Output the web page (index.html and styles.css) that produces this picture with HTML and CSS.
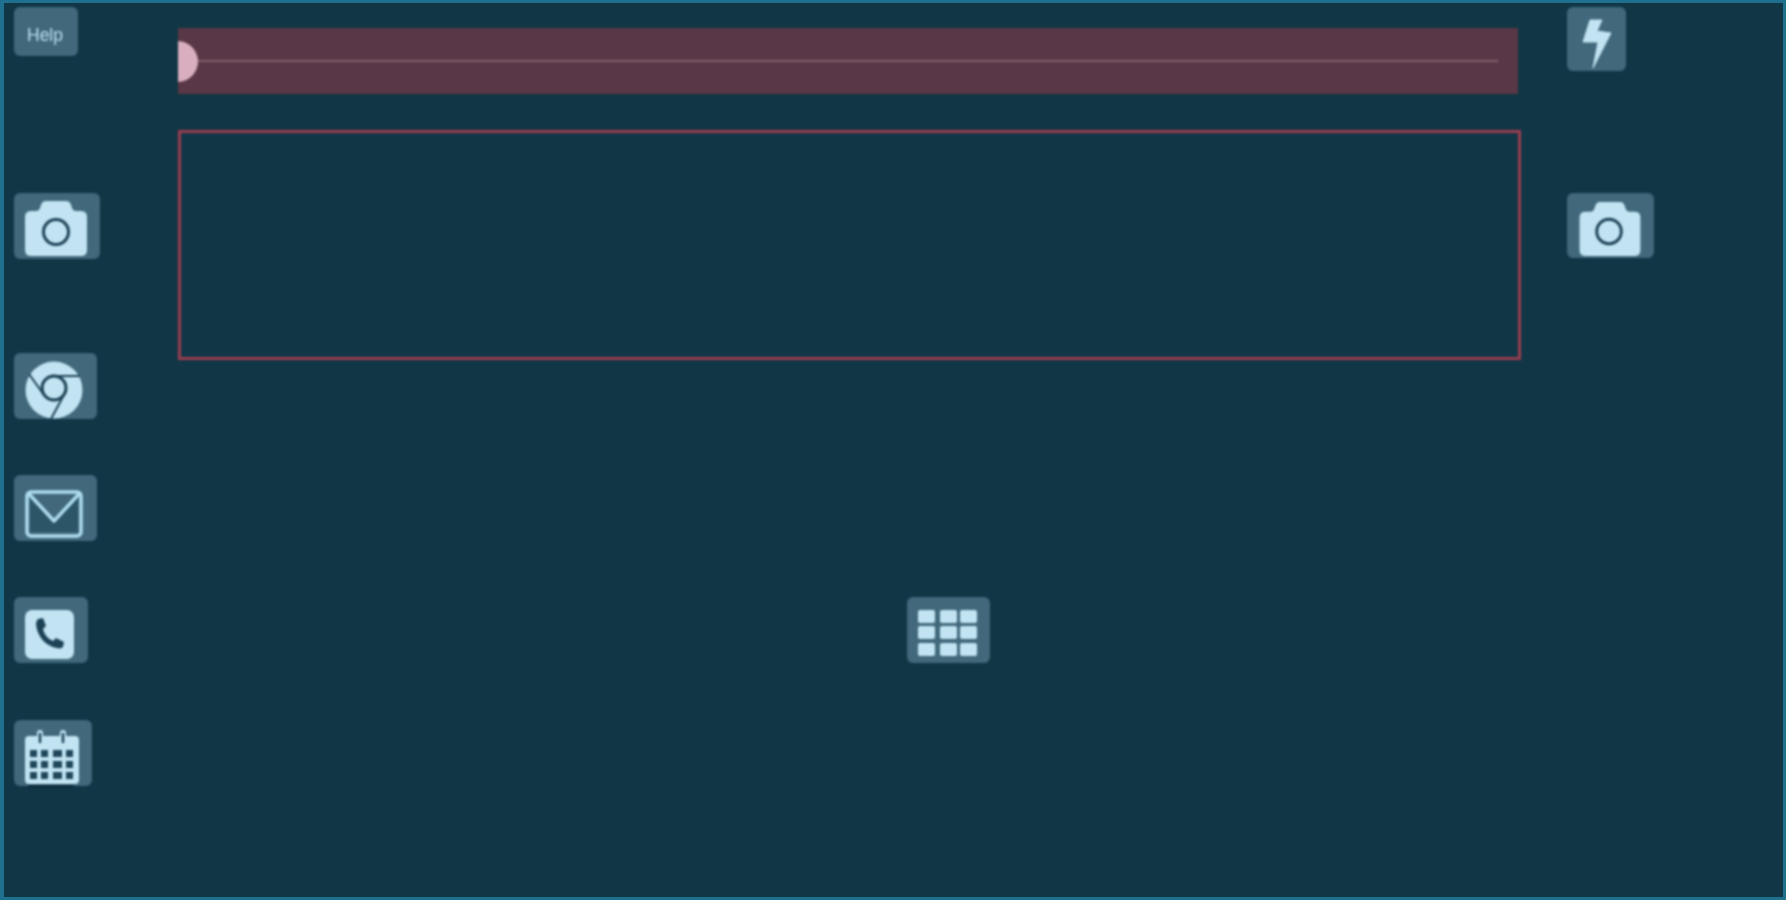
FILE: index.html
```html
<!DOCTYPE html>
<html lang="en">
<head>
    <meta charset="UTF-8">
    <title>Panel</title>
    <link rel="stylesheet" href="styles.css">
</head>
<body>
    <div class="frame">
        <div class="side-left">
            <button class="btn btn-help">Help</button>
            <button class="btn btn-camera">
                <svg class="icon icon-camera" width="62" height="55" viewBox="0 0 62 55">
                    <path fill="#c2e4f2" d="M6 10h5q3 0 4-3l1-3q1-4 5-4h20q4 0 5 4l1 3q1 3 4 3h5q6 0 6 6v33q0 6-6 6H6q-6 0-6-6V16q0-6 6-6z"/>
                    <circle cx="31" cy="31" r="12.5" fill="none" stroke="#1c4256" stroke-width="3"/>
                </svg>
            </button>
            <button class="btn btn-chrome">
                <svg class="icon icon-chrome" width="58" height="60" viewBox="0 0 58 60">
                    <circle cx="29" cy="30" r="28.5" fill="#c2e4f2"/>
                    <circle cx="29" cy="28" r="12" fill="none" stroke="#1c4256" stroke-width="3"/>
                    <path fill="none" stroke="#1c4256" stroke-width="2" d="M4 14l15 21M29 16h26M41 31L26 59"/>
                </svg>
            </button>
            <button class="btn btn-mail">
                <svg class="icon icon-mail" width="58" height="48" viewBox="0 0 58 48">
                    <path fill="#2d5568" d="M5 8l24 24L53 8v34H5z"/>
                    <rect x="2" y="2" width="54" height="44" rx="4" fill="none" stroke="#aeddef" stroke-width="3.5"/>
                    <path fill="none" stroke="#aeddef" stroke-width="3.5" stroke-linejoin="round" d="M4 4l25 27L54 4"/>
                </svg>
            </button>
            <button class="btn btn-phone">
                <svg class="icon icon-phone" width="49" height="49" viewBox="0 0 49 49">
                    <rect width="49" height="49" rx="7" fill="#c2e4f2"/>
                    <path fill="#1c4256" d="M13 9l5-1 3 8-3 3c1 5 5 10 10 12l3-3 8 4-1 5c-1 1-4 2-6 1C20 36 12 26 11 14c0-2 1-4 2-5z"/>
                </svg>
            </button>
            <button class="btn btn-calendar">
                <svg class="icon icon-calendar" width="54" height="58" viewBox="0 0 54 58">
                    <path fill="#c2e4f2" d="M4 6h8V3q0-3 3-3t3 3v3h17V3q0-3 3-3t3 3v3h9q4 0 4 4v40q0 4-4 4H4q-4 0-4-4V10q0-4 4-4z"/>
                    <path stroke="#1c4256" stroke-width="2.5" stroke-linecap="round" d="M15 4v8M38 4v8"/>
                    <g fill="#1f4659">
                        <rect x="5" y="20" width="7" height="7"/><rect x="16" y="20" width="7" height="7"/><rect x="28" y="20" width="9" height="7"/><rect x="41" y="20" width="7" height="7"/>
                        <rect x="5" y="31" width="7" height="7"/><rect x="16" y="31" width="7" height="7"/><rect x="28" y="31" width="9" height="7"/><rect x="41" y="31" width="7" height="7"/>
                        <rect x="5" y="42" width="7" height="7"/><rect x="16" y="42" width="7" height="7"/><rect x="28" y="42" width="9" height="7"/><rect x="41" y="42" width="7" height="7"/>
                    </g>
                    <rect x="3" y="55" width="46" height="2" fill="#0d2a3a"/>
                </svg>
            </button>
        </div>

        <div class="main">
            <div class="slider">
                <span class="slider-thumb"></span>
                <span class="slider-line"></span>
            </div>
            <div class="preview"></div>
            <button class="btn btn-grid">
                <svg class="icon icon-grid" width="60" height="46" viewBox="0 0 60 46">
                    <g fill="#c2e4f2">
                        <rect width="17" height="13" rx="2"/><rect x="22" width="17" height="13" rx="2"/><rect x="42" width="17" height="13" rx="2"/>
                        <rect y="16" width="17" height="13" rx="2"/><rect x="22" y="16" width="17" height="13" rx="2"/><rect x="42" y="16" width="17" height="13" rx="2"/>
                        <rect y="33" width="17" height="13" rx="2"/><rect x="22" y="33" width="17" height="13" rx="2"/><rect x="42" y="33" width="17" height="13" rx="2"/>
                    </g>
                </svg>
            </button>
        </div>

        <div class="side-right">
            <button class="btn btn-flash">
                <svg class="icon icon-flash" width="30" height="50" viewBox="0 0 30 50">
                    <path fill="#c2e4f2" stroke="#c2e4f2" stroke-linejoin="round" d="M8 1h12l-5 11 14 2-18 35 5-26H1z"/>
                </svg>
            </button>
            <button class="btn btn-camera-right">
                <svg class="icon icon-camera" width="62" height="54" viewBox="0 0 62 55">
                    <path fill="#c2e4f2" d="M6 10h5q3 0 4-3l1-3q1-4 5-4h20q4 0 5 4l1 3q1 3 4 3h5q6 0 6 6v33q0 6-6 6H6q-6 0-6-6V16q0-6 6-6z"/>
                    <circle cx="30" cy="30" r="12.5" fill="none" stroke="#1c4256" stroke-width="3"/>
                </svg>
            </button>
        </div>
    </div>
</body>
</html>
```

FILE: styles.css
```css
html, body {
    margin: 0;
    height: 100%;
}

body {
    background-color: #113646;
    font-family: "Liberation Sans", Arial, sans-serif;
    overflow: hidden;
}

.frame {
    display: flex;
    box-sizing: border-box;
    height: 900px;
    border: 3px solid #1f6f8e;
    border-left-width: 4px;
}

/* the whole shot is a little soft */
.side-left, .main, .side-right {
    filter: blur(0.9px);
}

.side-left {
    display: flex;
    flex-direction: column;
    align-items: flex-start;
    width: 174px;
    padding-left: 10px;
    box-sizing: border-box;
}

.main {
    display: flex;
    flex-direction: column;
    align-items: flex-start;
    width: 1343px;
}

.side-right {
    display: flex;
    flex-direction: column;
    align-items: flex-start;
    padding-left: 46px;
}

.btn {
    display: flex;
    align-items: flex-start;
    box-sizing: border-box;
    height: 66px;
    padding: 0;
    border: none;
    border-radius: 6px;
    background-color: #41687b;
    flex-shrink: 0;
}

.icon {
    display: block;
    flex-shrink: 0;
}

/* left column */
.btn-help {
    width: 64px;
    height: 49px;
    margin-top: 4px;
    padding: 18px 0 0 13px;
    color: #bce2f1;
    font-size: 17.5px;
    line-height: 20px;
}

.btn-camera {
    width: 86px;
    margin-top: 137px;
    padding: 8px 0 0 11px;
}

.btn-chrome {
    width: 83px;
    margin-top: 94px;
    padding: 7px 0 0 11px;
}

.btn-mail {
    width: 83px;
    margin-top: 56px;
    padding: 15px 0 0 11px;
}

.btn-phone {
    width: 74px;
    margin-top: 56px;
    padding: 13px 0 0 11px;
}

.btn-calendar {
    width: 78px;
    margin-top: 57px;
    padding: 10px 0 0 11px;
}

/* middle */
.slider {
    display: flex;
    align-items: center;
    width: 1340px;
    height: 66px;
    margin-top: 25px;
    background-color: #5a3746;
    overflow: hidden;
}

.slider-thumb {
    width: 41px;
    height: 41px;
    margin-left: -21px;
    border-radius: 50%;
    background-color: #d9afbf;
    flex-shrink: 0;
}

.slider-line {
    flex: 1;
    height: 2px;
    margin-right: 20px;
    background-color: #80606d;
}

.preview {
    box-sizing: border-box;
    width: 1343px;
    height: 230px;
    margin-top: 36px;
    border: 3px solid #9a3d50;
}

.btn-grid {
    width: 83px;
    margin-top: 237px;
    margin-left: 729px;
    padding: 13px 0 0 11px;
}

/* right column */
.btn-flash {
    width: 59px;
    height: 64px;
    margin-top: 4px;
    padding: 12px 0 0 15px;
}

.btn-camera-right {
    width: 87px;
    height: 65px;
    margin-top: 122px;
    padding: 9px 0 0 12px;
}
```
